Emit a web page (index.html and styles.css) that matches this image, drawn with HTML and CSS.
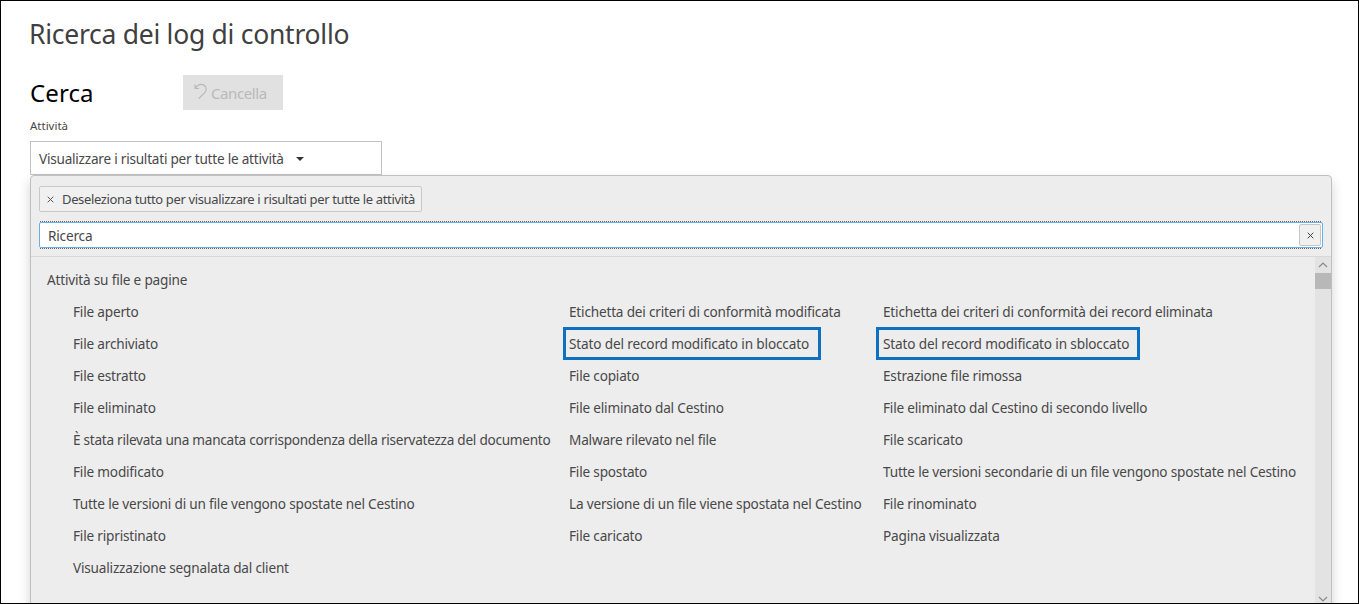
FILE: index.html
```html
<!DOCTYPE html>
<html lang="it">
<head>
<meta charset="utf-8">
<title>Ricerca dei log di controllo</title>
<link rel="stylesheet" href="styles.css">
</head>
<body>
<main class="page">
  <h1 class="title">Ricerca dei log di controllo</h1>
  <div class="toolbar">
    <h2 class="subtitle">Cerca</h2>
    <button class="clear" disabled>
      <svg width="14" height="18" viewBox="0 0 14 18" fill="none" stroke="#b9b9b9" stroke-width="1.2"><path d="M1 2.500V6.500H5M1.300 6.200C3.500 3.200 6.500 1.800 9.500 2.900C12.500 4.300 12.900 7.800 11 10.300L4.800 16.500"/></svg>
      <span>Cancella</span>
    </button>
  </div>
  <div class="label">Attività</div>
  <div class="select"><span>Visualizzare i risultati per tutte le attività</span><i class="caret"></i></div>
  <section class="panel">
    <div class="chip"><svg width="7" height="7" viewBox="0 0 7 7" stroke="#555" stroke-width="1"><path d="M.7.7l5.600 5.600M6.300.7L.7 6.300"/></svg><span>Deseleziona tutto per visualizzare i risultati per tutte le attività</span></div>
    <div class="search"><span class="query">Ricerca</span><div class="reset"><svg width="7" height="7" viewBox="0 0 7 7" stroke="#444" stroke-width="1"><path d="M.7.7l5.600 5.600M6.300.7L.7 6.300"/></svg></div></div>
    <div class="results">
      <div class="list">
        <div class="group">Attività su file e pagine</div>
        <div class="grid">
          <span>File aperto</span><span>Etichetta dei criteri di conformità modificata</span><span>Etichetta dei criteri di conformità dei record eliminata</span>
          <span>File archiviato</span><span class="mark mark-a">Stato del record modificato in bloccato</span><span class="mark mark-b">Stato del record modificato in sbloccato</span>
          <span>File estratto</span><span>File copiato</span><span>Estrazione file rimossa</span>
          <span>File eliminato</span><span>File eliminato dal Cestino</span><span>File eliminato dal Cestino di secondo livello</span>
          <span class="tight">È stata rilevata una mancata corrispondenza della riservatezza del documento</span><span>Malware rilevato nel file</span><span>File scaricato</span>
          <span>File modificato</span><span>File spostato</span><span>Tutte le versioni secondarie di un file vengono spostate nel Cestino</span>
          <span>Tutte le versioni di un file vengono spostate nel Cestino</span><span>La versione di un file viene spostata nel Cestino</span><span>File rinominato</span>
          <span>File ripristinato</span><span>File caricato</span><span>Pagina visualizzata</span>
          <span>Visualizzazione segnalata dal client</span>
        </div>
      </div>
      <div class="scrollbar">
        <svg class="arrow" width="16" height="16" viewBox="0 0 16 16" fill="none" stroke="#8a8a8a" stroke-width="1.2"><path d="M4 10L8 6L12 10"/></svg>
        <div class="thumb"></div>
        <svg class="arrow arrow-down" width="16" height="10" viewBox="0 0 16 10" fill="none" stroke="#8a8a8a" stroke-width="1.2"><path d="M4 3L8 7L12 3"/></svg>
      </div>
    </div>
  </section>
</main>
</body>
</html>
```
FILE: styles.css
```css
* { box-sizing: border-box; }
body { margin: 0; background: #fff; }
.page {
  width: 1359px; height: 604px; padding: 0 26px 0 29px;
  border: 1px solid #000; overflow: hidden;
  font: 13.6px/20px "Noto Sans", "Open Sans", sans-serif; letter-spacing: -.19px; color: #484848;
  display: flex; flex-direction: column; align-items: flex-start;
}
.title { margin: 14px 0 0 -1px; font-size: 26.5px; line-height: 38px; font-weight: 400; letter-spacing: -.27px; color: #404040; white-space: nowrap; }
.toolbar { display: flex; margin-top: 22px; height: 36px; }
.subtitle { margin: 0; width: 153px; font-size: 24px; line-height: 36px; font-weight: 400; letter-spacing: .1px; color: #000; }
.clear { display: flex; gap: 3px; align-items: flex-start; width: 100px; height: 35px; padding: 7px 0 0 11px; border: 0; background: #e1e1e1; color: #b9b9b9; font: 15px/22px "Noto Sans", sans-serif; letter-spacing: -.4px; }
.label { margin-top: 5px; font-size: 11.5px; letter-spacing: 0; line-height: 20px; }
.select { display: flex; align-items: center; width: 352px; height: 34px; margin-top: 5px; padding: 2px 8px 0; border: 1px solid #c2c2c2; white-space: nowrap; letter-spacing: -.23px; flex: none; }
.caret { margin-left: 12px; border: 4px solid transparent; border-top-color: #333; border-bottom: 0; }
.panel { width: 1302px; height: 440px; flex: none; padding-top: 10px; border: 1px solid #bfc0c0; border-radius: 4px; background: #ededed; box-shadow: 0 6px 12px rgba(0,0,0,.175); }
.chip { display: flex; align-items: center; gap: 8px; width: 383px; height: 26px; margin-left: 8px; padding-left: 7px; border: 1px solid #c6c8ca; border-radius: 2px; background: #f0f0f0; white-space: nowrap; font-size: 13px; letter-spacing: -.36px; }
.chip svg { flex: none; }
.search { display: flex; justify-content: space-between; align-items: center; width: 1284px; height: 26px; margin: 10px 0 0 8px; padding: 0 1px 0 8px; background: #fff; border: 1px solid #66afe9; border-radius: 2px; position: relative; }
.search::before, .search::after { content: ""; position: absolute; left: 0; right: 0; height: 1px; background: repeating-linear-gradient(90deg, #666 0 1px, transparent 1px 2px); }
.search::before { top: -2px; }
.search::after { bottom: -2px; }
.query { padding-top: 2px; }
.reset { width: 22px; height: 22px; display: grid; place-items: center; border: 1px solid #c4c6c8; border-radius: 2px; background: #f0f0f0; }
.results { display: flex; justify-content: space-between; height: 348px; margin-top: 8px; border-top: 1px solid #d8d8d8; }
.list { padding: 7px 0 0 16px; width: 1284px; }
.group { line-height: 32px; }
.grid { display: grid; grid-template-columns: 496px 314px 450px; grid-auto-rows: 32px; align-items: center; padding-left: 26px; white-space: nowrap; }
.tight { letter-spacing: -.26px; }
.mark { align-self: start; height: 33px; margin: -1px 0 0 -6px; padding-left: 3px; border: 3px solid #0f6fc0; line-height: 28px; letter-spacing: -.15px; }
.mark-a { width: 258px; }
.mark-b { width: 264px; margin-left: -7px; padding-left: 4px; }
.scrollbar { display: flex; flex-direction: column; width: 16px; background: #e3e3e3; }
.thumb { height: 16px; background: #b8b8b8; }
.arrow-down { margin-top: auto; }
```
